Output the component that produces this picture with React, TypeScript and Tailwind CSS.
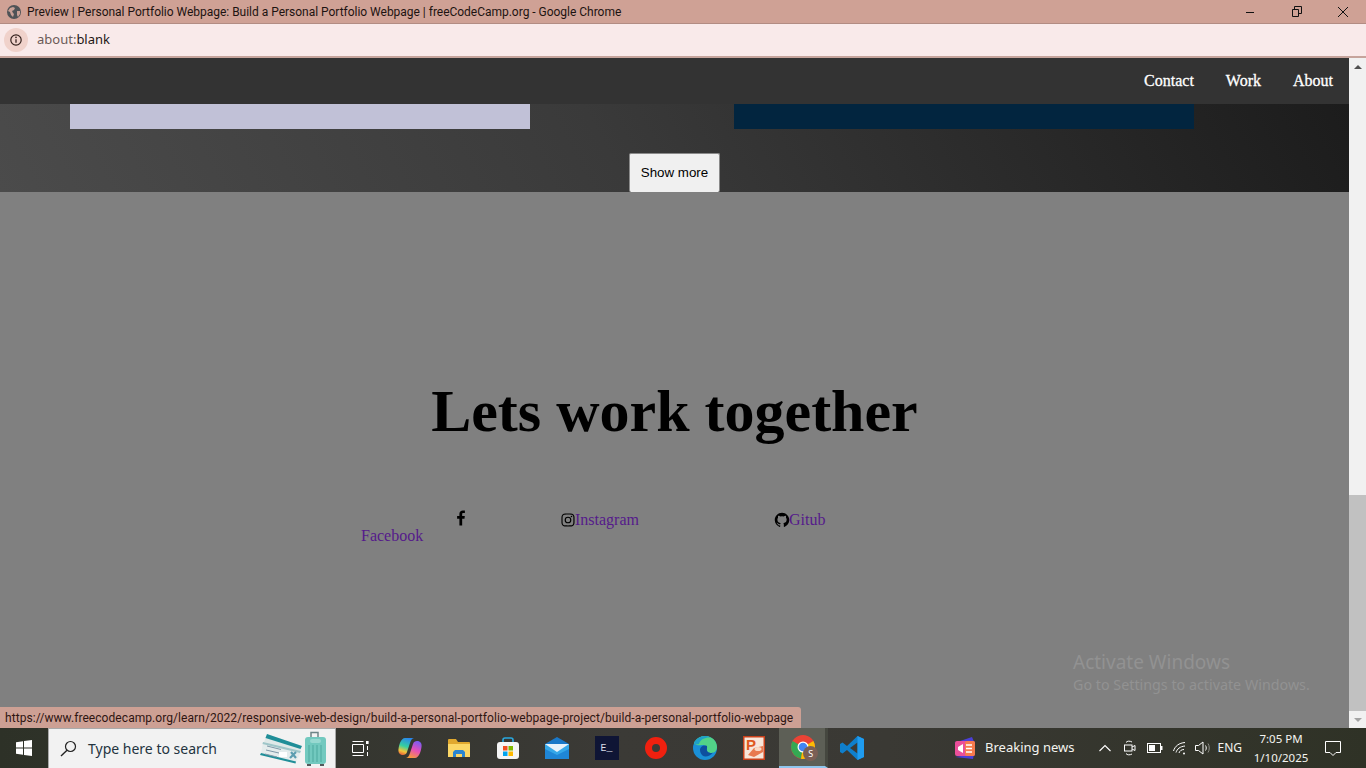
import { BiLogoFacebook, BiLogoGithub, BiLogoInstagram } from "react-icons/bi";

const sans = "font-['Noto_Sans','Open_Sans',sans-serif]";
const narrow = "font-['Roboto','Noto_Sans',sans-serif]";
const serif = "font-['Liberation_Serif',serif]";

// Taskbar icon cell, all pinned apps sit on the same grid
const Cell = ({ children, active }: { children: React.ReactNode; active?: boolean }) => (
  <div
    className={
      "flex h-10 w-[49.2px] shrink-0 items-center justify-center " +
      (active ? "border-b-2 border-[#8fc6ee] border-r-[3px] border-r-[#45473f] bg-[#5d5f56] pl-[3px]" : "")
    }
  >
    {children}
  </div>
);

const TitleBar = () => (
  <div className="flex h-6 shrink-0 items-center border-b border-[#b28c83] bg-[#cfa195] pl-[7px]">
    <svg width="14" height="14" viewBox="0 0 14 14">
      <circle cx="7" cy="7" r="7" fill="#4f5357" />
      <path d="M3 3l3-1 2 1-1 2-2 1 1 2 1 1-1 3-2-2-1-3-2-1z M10 6l3 0 0 3-2 3-1-2z" fill="#c9a197" />
    </svg>
    <span className={"ml-[6px] text-[12px] tracking-[-0.02px] whitespace-nowrap text-[#1d1311] " + narrow}>
      Preview | Personal Portfolio Webpage: Build a Personal Portfolio Webpage | freeCodeCamp.org - Google Chrome
    </span>
    <div className="ml-auto flex items-center text-[#1a1a1a]">
      <div className="flex w-[46px] justify-center">
        <svg width="10" height="10" viewBox="0 0 10 10">
          <path d="M0 5.5h8" stroke="#111" fill="none" />
        </svg>
      </div>
      <div className="flex w-[46px] justify-center">
        <svg width="10" height="11" viewBox="0 0 10 11">
          <path d="M.5 3.5h6v7h-6z M2.5 3.5v-3h7v7h-3" stroke="#111" fill="none" />
        </svg>
      </div>
      <div className="flex w-[46px] justify-center">
        <svg width="12" height="12" viewBox="0 0 12 12">
          <path d="M1 1l10 10M11 1L1 11" stroke="#111" fill="none" />
        </svg>
      </div>
    </div>
  </div>
);

const AddressBar = () => (
  <div className="flex h-[34px] shrink-0 items-center border-b-2 border-[#c6a49c] bg-[#f9eaea] pl-1">
    <div className="flex h-6 w-[24px] items-center justify-center rounded-full bg-[#f0d2cb]">
      <svg width="14" height="14" viewBox="0 0 14 14">
        <circle cx="7" cy="7" r="5.2" stroke="#33201c" strokeWidth="1.2" fill="none" />
        <path d="M7 6.2v3.6" stroke="#33201c" strokeWidth="1.3" />
        <circle cx="7" cy="4.4" r=".8" fill="#33201c" />
      </svg>
    </div>
    <span className={"ml-[9px] text-[13px] " + sans}>
      <span className="text-[#6b5a57]">about:</span>
      <span className="text-[#1f1614]">blank</span>
    </span>
  </div>
);

const Scrollbar = () => (
  <div className="flex w-[17px] shrink-0 flex-col bg-[#f1f1f1]">
    <div className="flex h-[17px] items-center justify-center">
      <div className="h-0 w-0 border-x-[4px] border-b-[4px] border-x-transparent border-b-[#505050]" />
    </div>
    <div className="mt-[420px] h-[216px] bg-[#c1c1c1]" />
    <div className="flex h-[17px] items-center justify-center">
      <div className="h-0 w-0 border-x-[4px] border-t-[4px] border-x-transparent border-t-[#a3a3a3]" />
    </div>
  </div>
);

const Nav = () => (
  <nav className={"flex h-[46px] shrink-0 items-center justify-end gap-8 bg-[#333333] pr-4 text-[16px] text-white [-webkit-text-stroke:0.3px_white] " + serif}>
    <a>Contact</a>
    <a>Work</a>
    <a>About</a>
  </nav>
);

const Projects = () => (
  <section className="flex h-[88px] shrink-0 flex-col bg-[linear-gradient(62deg,#4b4b4b_0%,#3a3a3a_45%,#1c1c1c_100%)]">
    <div className="flex gap-[204px] pl-[70px]">
      <div className="h-[25px] w-[460px] bg-[#c1c1d7]" />
      <div className="h-[25px] w-[460px] bg-[#02253f]" />
    </div>
    <button className="mx-auto mt-6 flex h-[39px] w-[91px] items-center justify-center rounded-[2px] border border-[#8a8a8a] border-b-0 bg-[#f0f0f0] font-['Liberation_Sans',sans-serif] text-[13.33px] text-black">
      Show more
    </button>
  </section>
);

const Contact = () => (
  <section className={"flex flex-1 flex-col bg-[#808080] " + serif}>
    <h1 className="mt-[184px] text-center text-[60px] leading-[70px] font-bold text-black">Lets work together</h1>
    <div className="mt-[65px] flex h-8 items-start pl-[361px] text-[16px] leading-[18px] text-[#551a8b]">
      <a className="mt-4 w-[90px]">Facebook</a>
      <BiLogoFacebook className="-mt-[3px] h-5 w-5 text-black" />
      <div className="ml-[90px] flex w-[214px] items-center">
        <BiLogoInstagram className="h-[16px] w-[14px] scale-125 text-black" />
        <a>Instagram</a>
      </div>
      <div className="flex items-center">
        <BiLogoGithub className="h-4 w-[14px] scale-125 text-black" />
        <a>Gitub</a>
      </div>
    </div>
  </section>
);

const Taskbar = () => (
  <div className="flex h-10 shrink-0 items-center bg-[linear-gradient(90deg,#2d3127_0%,#3b3a36_45%,#3a3934_65%,#2f3226_100%)] text-white">
    <div className="flex h-10 w-12 shrink-0 items-center justify-center">
      <svg width="16" height="16" viewBox="0 0 16 16">
        <path d="M0 2.2l7-1v6.3H0z M8 1l8-1v7.5H8z M0 8.5h7v6.3l-7-1z M8 8.500h8V16l-8-1.100z" fill="#fff" />
      </svg>
    </div>
    <div className={"flex h-10 w-[288px] shrink-0 items-center border-x border-t border-[#a9a9a9] bg-[#f2f2f2] pl-[11px] " + sans}>
      <svg width="17" height="17" viewBox="0 0 17 17">
        <circle cx="10.5" cy="6.5" r="5" stroke="#222" strokeWidth="1.2" fill="none" />
        <path d="M7 10.3L1 16" stroke="#222" strokeWidth="1.4" />
      </svg>
      <span className="ml-[11px] text-[14px] whitespace-nowrap text-[#24343f]">Type here to search</span>
      {/* search box promo: two boarding passes and a suitcase */}
      <svg className="ml-auto mr-[9px]" width="66" height="38" viewBox="0 0 66 38">
        <path d="M7 4l35 12-4 11L3 15z" fill="#dfe9e8" />
        <path d="M7 4l35 12-1.500 3L5.500 8z" fill="#1f8e98" />
        <path d="M3 12l38 9-5 11L1 24z" fill="#e4ecec" />
        <path d="M1 23l35 8.500-.5 2L0 25z" fill="#1f8e98" />
        <path d="M3 12l38 9-1 2L2.500 14z" fill="#9fc6c9" />
        <path d="M7 16l14 3.500M6 20l13 3M5 24l12 3" stroke="#7f98a8" />
        <rect x="19" y="22" width="8" height="5" fill="#fff" />
        <path d="M31 22l5 6M36 22l-6 6" stroke="#5c9db0" strokeWidth="2.200" />
        <path d="M51 8V2.500h7V8" fill="none" stroke="#6d8587" strokeWidth="1.500" />
        <rect x="45" y="7" width="21" height="27" rx="3" fill="#72c9bf" />
        <rect x="50" y="9" width="11" height="4" rx="2" fill="#98d9d1" />
        <path d="M49 15v17M53 15v17M57 15v17M61 15v17" stroke="#4da99f" />
        <path d="M47 34h4v2h-4zM60 34h4v2h-4z" fill="#55595c" />
      </svg>
    </div>
    <Cell>
      <svg width="17" height="17" viewBox="0 0 17 17" fill="none" stroke="#fff">
        <path d="M.5 1.500h11M.5 15.500h11M.5 4.500h11v8H.5z" />
        <rect x="14" y="1" width="2.600" height="3" fill="#fff" stroke="none" />
        <path d="M15.500 6v4M15.500 12v4" />
      </svg>
    </Cell>
    <Cell>
      <svg width="24" height="22" viewBox="0 0 24 22">
        <defs>
          <linearGradient id="cp1" x1="0.6" y1="0" x2="0.3" y2="1">
            <stop offset="0" stopColor="#2a86ec" />
            <stop offset="0.5" stopColor="#35cfa0" />
            <stop offset="0.8" stopColor="#f3c53a" />
            <stop offset="1" stopColor="#e8663a" />
          </linearGradient>
          <linearGradient id="cp2" x1="0.7" y1="0" x2="0.3" y2="1">
            <stop offset="0" stopColor="#7a5cf2" />
            <stop offset="0.5" stopColor="#e64fb8" />
            <stop offset="1" stopColor="#f79a3a" />
          </linearGradient>
        </defs>
        <path d="M7 1h9c-2 .5-3 2-4 5l-3 9c-.8 2.200-2 3-4 3-3.500 0-5-2.500-4.500-6C1 8 3 1 7 1z" fill="url(#cp1)" />
        <path d="M17 21H8c2-.5 3-2 4-5l3-9c.8-2.200 2-3 4-3 3.500 0 5 2.500 4.500 6C23 14 21 21 17 21z" fill="url(#cp2)" />
      </svg>
    </Cell>
    <Cell>
      <svg width="22" height="20" viewBox="0 0 22 20">
        <path d="M0 2a1 1 0 011-1h7l2 3h11a1 1 0 011 1v14H0z" fill="#e0a82e" />
        <path d="M0 6h22v13H0z" fill="#fbd766" />
        <path d="M5 19v-5l2-2h8l2 2v5h-3v-3H8v3z" fill="#2a86d1" />
      </svg>
    </Cell>
    <Cell>
      <svg width="24" height="24" viewBox="0 0 24 24">
        <path d="M7 7V4a2 2 0 012-2h6a2 2 0 012 2v3" fill="none" stroke="#29a8e0" strokeWidth="1.6" />
        <rect x="1" y="6" width="22" height="17" rx="3" fill="#f5f5f5" />
        <rect x="7" y="10" width="4.500" height="4.500" fill="#f25022" />
        <rect x="12.500" y="10" width="4.500" height="4.500" fill="#7fba00" />
        <rect x="7" y="15.500" width="4.500" height="4.500" fill="#00a4ef" />
        <rect x="12.500" y="15.500" width="4.500" height="4.500" fill="#ffb900" />
      </svg>
    </Cell>
    <Cell>
      <svg width="24" height="22" viewBox="0 0 24 22">
        <path d="M0 7l12-7 12 7v15H0z" fill="#1a78c8" />
        <path d="M0 7h24v15H0z" fill="#35a7e8" />
        <path d="M0 7h24l-12 8z" fill="#e8f2fa" />
        <path d="M0 22V12l12 6 12-6v10z" fill="#1f86d6" />
      </svg>
    </Cell>
    <Cell>
      <div className="flex h-6 w-6 items-center justify-center bg-[#0f1535] font-['Liberation_Mono',monospace] text-[10px] text-[#d8dbe8]">
        E_
      </div>
    </Cell>
    <Cell>
      <div className="h-[22px] w-[22px] rounded-full border-[7px] border-[#f0200f] bg-[#3b3a36]" />
    </Cell>
    <Cell>
      <svg width="24" height="24" viewBox="0 0 24 24">
        <circle cx="12" cy="12" r="12" fill="#1a8fd6" />
        <path d="M1 7C3 3 7 0 12 0c7 0 12 5 12 11 0 3-2 6-6 6-2.500 0-4.500-1-4-3 .6-3-2-5.500-5-5-3 .4-5 1-8-2z" fill="#52d388" />
        <path d="M1 7C3 3 7 0 12 0c2 0 4 .4 5.500 1.500C13 1 7 3 6 8 4.500 8.500 2.500 8.500 1 7z" fill="#1fa0c8" />
        <path d="M7 14c0-3.500 4-5.500 7-4 .5 2-1 4 .5 5.500 1.500 1.500 4 2 5.500 1-3 4-8 5-10.500 3C8 18 7 16 7 14z" fill="#0e4f9f" />
      </svg>
    </Cell>
    <Cell>
      <svg width="22" height="24" viewBox="0 0 22 24">
        <rect x="0" y="0" width="22" height="24" fill="#c8401a" />
        <rect x="1.500" y="1.500" width="19" height="21" fill="#f7e6da" />
        <path d="M5 19l6-7 9-2v6l-9 5z" fill="#e8794f" />
        <ellipse cx="15" cy="13" rx="3.500" ry="2" fill="#f9d9c6" />
        <text x="3" y="14" fontFamily="Liberation Sans, sans-serif" fontWeight="700" fontSize="15" fill="#e0591f">
          P
        </text>
      </svg>
    </Cell>
    <Cell active>
      <div className="relative h-6 w-6">
        <svg width="24" height="24" viewBox="0 0 24 24">
          <circle cx="12" cy="12" r="12" fill="#ea4335" />
          <path d="M12 12L1.600 6A12 12 0 000 12a12 12 0 0010 11.800z" fill="#34a853" />
          <path d="M12 12l10.400-6A12 12 0 0124 12a12 12 0 01-14 11.800z" fill="#fbbc05" />
          <circle cx="12" cy="12" r="5.500" fill="#fff" />
          <circle cx="12" cy="12" r="4.300" fill="#4285f4" />
        </svg>
        <div className={"absolute -right-[3px] -bottom-[2px] flex h-[15px] w-[15px] items-center justify-center rounded-full bg-[#7b5f55] text-[9px] text-white " + sans}>
          S
        </div>
      </div>
    </Cell>
    <Cell>
      <svg width="24" height="24" viewBox="0 0 24 24">
        <path d="M17.500 0L24 3v18l-6.500 3L7 14l-4.500 3.500L0 16V8l2.500-1.500L7 10z" fill="#0f7fcc" />
        <path d="M17.500 6.500v11L10 12z" fill="#3b3a36" />
        <path d="M17.500 0L24 3v18l-6.500 3z" fill="#1f9cf0" />
      </svg>
    </Cell>
    <div className={"ml-auto flex h-10 items-center pr-[25px] " + sans}>
      <svg width="24" height="24" viewBox="0 0 24 24">
        <path d="M1 7l18-6 3 7z M2 21l18 2 1-5z" fill="#4b3fd8" />
        <rect x="2" y="5" width="20" height="15" rx="2" fill="#ea4f9a" />
        <rect x="12" y="5" width="10" height="15" rx="2" fill="#f77b4d" />
        <path d="M5 11l5-3v9l-5-3z" fill="#fff" />
        <path d="M13 9h6M13 12.500h6M13 16h6" stroke="#fff" strokeWidth="1.500" />
      </svg>
      <span className="ml-2 text-[13px] text-[#f4f4f0]">Breaking news</span>
      <svg className="ml-[25px]" width="12" height="8" viewBox="0 0 12 8" fill="none" stroke="#fff" strokeWidth="1.100">
        <path d="M.5 7L6 1.500 11.500 7" />
      </svg>
      <svg className="ml-[13px]" width="12" height="16" viewBox="0 0 12 16" fill="none" stroke="#fff">
        <path d="M2 2.500C3 .8 6 .8 8 2M2 13.500c1 1.700 4 1.700 6 .5" />
        <rect x=".5" y="5" width="7.500" height="6" />
        <path d="M8 7l3-1.500v5L8 9" />
      </svg>
      <svg className="ml-[11px]" width="16" height="10" viewBox="0 0 16 10">
        <rect x=".5" y=".5" width="13" height="9" fill="none" stroke="#fff" />
        <rect x="2" y="2" width="6" height="6" fill="#fff" />
        <rect x="14" y="3" width="1.500" height="4" fill="#fff" />
      </svg>
      <svg className="ml-[10px]" width="13" height="13" viewBox="0 0 13 13" fill="none" stroke="#fff">
        <path d="M.5 9C2 4 6 1 12 .5M3 10.500C4 7 7 4.500 12 4M6 11c.5-2 2.500-3.500 5-3.500" />
        <circle cx="11" cy="11.500" r="1" fill="#fff" stroke="none" />
      </svg>
      <svg className="ml-[9px]" width="17" height="14" viewBox="0 0 17 14" fill="none" stroke="#fff">
        <path d="M.5 4.500h3L8 1v12L3.500 9.500h-3z" />
        <path d="M10.500 4.500c1 1.500 1 3.500 0 5" />
        <path d="M13 2.500c1.700 2.500 1.700 6.500 0 9" stroke="#8f8f89" />
      </svg>
      <span className="ml-[5px] text-[12px] text-[#f4f4f0]">ENG</span>
      <div className="ml-[13px] flex w-[52px] flex-col items-center text-[11.5px] leading-[19px] text-[#f4f4f0] whitespace-nowrap">
        <span>7:05 PM</span>
        <span>1/10/2025</span>
      </div>
      <svg className="ml-[18px]" width="16" height="16" viewBox="0 0 16 16" fill="none" stroke="#fff">
        <path d="M.5 1.500h15v11h-4.500L8 15.500 5 12.500H.5z" />
      </svg>
    </div>
  </div>
);

const App = () => {
  return (
    <div className="relative flex h-[768px] w-[1366px] flex-col overflow-hidden">
      <TitleBar />
      <AddressBar />
      <div className="flex h-[670px] shrink-0">
        <main className="flex flex-1 flex-col">
          <Nav />
          <Projects />
          <Contact />
        </main>
        <Scrollbar />
      </div>
      <Taskbar />

      {/* Overlays: the watermark and the link preview bubble */}
      <div className={"absolute top-[650px] left-[1073px] text-[#929292] " + sans}>
        <p className="text-[19px] leading-[25px]">Activate Windows</p>
        <p className="text-[14.3px] leading-[20px] whitespace-nowrap">Go to Settings to activate Windows.</p>
      </div>
      <div className={"absolute bottom-10 left-0 flex h-[21px] w-[801px] items-center rounded-tr-[3px] bg-[#cda094] pl-[5px] text-[12px] tracking-[0.065px] whitespace-nowrap text-[#2e1512] " + narrow}>
        https://www.freecodecamp.org/learn/2022/responsive-web-design/build-a-personal-portfolio-webpage-project/build-a-personal-portfolio-webpage
      </div>
    </div>
  );
};

export default App;
